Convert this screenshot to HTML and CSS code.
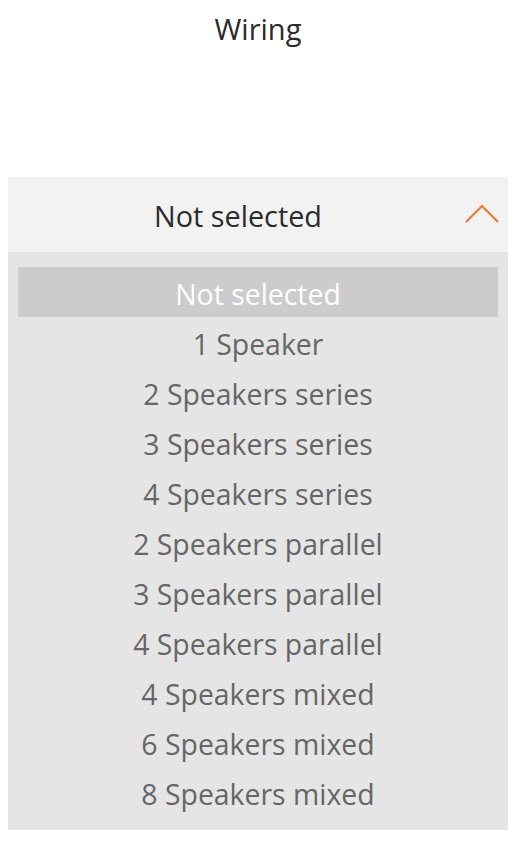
FILE: index.html
```html
<!DOCTYPE html>
<html>
<head>
<meta charset="utf-8">
<link rel="stylesheet" href="styles.css">
</head>
<body>
<div class="page">
  <h1 class="title">Wiring</h1>
  <div class="select">
    <div class="select-head">
      <span class="select-value">Not selected</span>
      <svg class="chevron" width="34" height="20" viewBox="0 0 34 20"><polyline points="1,18 17,2 33,18" fill="none" stroke="#ec7a3a" stroke-width="2.2"/></svg>
    </div>
    <ul class="options">
      <li class="option selected">Not selected</li>
      <li class="option">1 Speaker</li>
      <li class="option">2 Speakers series</li>
      <li class="option">3 Speakers series</li>
      <li class="option">4 Speakers series</li>
      <li class="option">2 Speakers parallel</li>
      <li class="option">3 Speakers parallel</li>
      <li class="option">4 Speakers parallel</li>
      <li class="option">4 Speakers mixed</li>
      <li class="option">6 Speakers mixed</li>
      <li class="option">8 Speakers mixed</li>
    </ul>
  </div>
</div>
</body>
</html>
```
FILE: styles.css
```css
* { box-sizing: border-box; }
body {
  margin: 0;
  background: #ffffff;
  font-family: "Open Sans", "Noto Sans", sans-serif;
}
.page {
  padding: 0 10px 0 8px;
}
.title {
  margin: 0;
  height: 177px;
  padding-top: 9px;
  text-align: center;
  font-weight: 400;
  font-size: 29px;
  line-height: 40px;
  color: #2b2b2b;
}
.select {
  width: 500px;
}
.select-head {
  position: relative;
  height: 75px;
  padding-right: 40px;
  background: #f2f2f2;
  display: flex;
  align-items: center;
  justify-content: center;
}
.select-value {
  font-size: 28.8px;
  color: #2b2b2b;
  line-height: 75px;
  margin-top: 2px;
}
.chevron {
  position: absolute;
  right: 9px;
  top: 27px;
}
.options {
  list-style: none;
  margin: 0;
  padding: 15px 10px 13px;
  background: #e5e5e5;
}
.option {
  height: 50px;
  line-height: 50px;
  padding-top: 2px;
  text-align: center;
  font-size: 28.4px;
  color: #666666;
}
.option.selected {
  background: #cccccc;
  color: #ffffff;
}
```
